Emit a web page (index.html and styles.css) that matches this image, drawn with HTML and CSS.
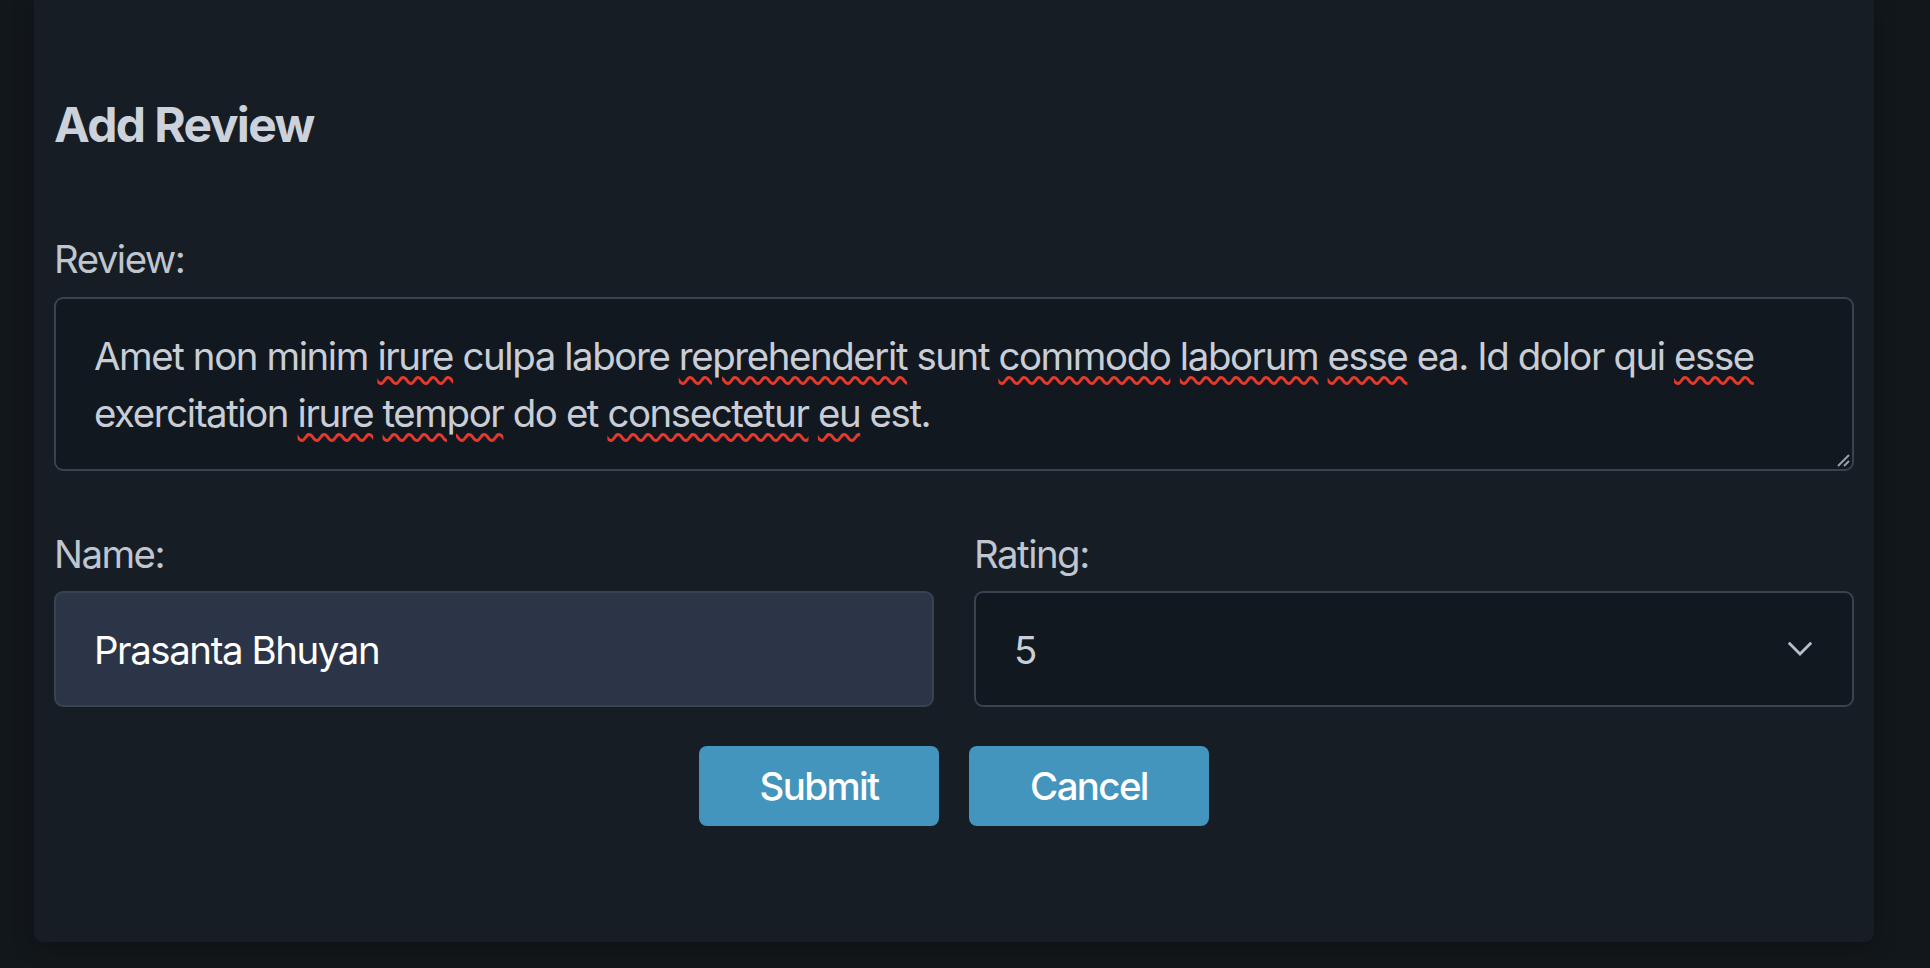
FILE: index.html
```html
<!DOCTYPE html>
<html lang="en">
<head>
<meta charset="utf-8">
<title>Add Review</title>
<link rel="stylesheet" href="styles.css">
</head>
<body>
<main class="page">
  <section class="card">
    <h2 class="title">Add Review</h2>
    <form class="form">
      <div class="field">
        <label class="label">Review:</label>
        <div class="textarea" role="textbox" aria-multiline="true">Amet non minim <span class="sp">irure</span> culpa labore <span class="sp">reprehenderit</span> sunt <span class="sp">commodo</span> <span class="sp">laborum</span> <span class="sp">esse</span> ea. Id dolor qui <span class="sp">esse</span> exercitation <span class="sp">irure</span> <span class="sp">tempor</span> do et <span class="sp">consectetur</span> <span class="sp">eu</span> est.<svg class="resize" width="14" height="14" viewBox="0 0 14 14"><path d="M13 2 L2 13 M13 8 L8 13" stroke="#9aa0a6" stroke-width="2" fill="none"/></svg></div>
      </div>
      <div class="row">
        <div class="field">
          <label class="label label-row">Name:</label>
          <div class="input">Prasanta Bhuyan</div>
        </div>
        <div class="field">
          <label class="label label-row">Rating:</label>
          <div class="select">
            <span class="select-value">5</span>
            <svg class="chev" width="26" height="15" viewBox="0 0 26 15"><path d="M1.8 1.8 L13 13 L24.2 1.8" stroke="#b9c0ca" stroke-width="2.8" fill="none"/></svg>
          </div>
        </div>
      </div>
      <div class="actions">
        <button type="button" class="btn">Submit</button>
        <button type="button" class="btn">Cancel</button>
      </div>
    </form>
  </section>
</main>
</body>
</html>
```
FILE: styles.css
```css
* { box-sizing: border-box; }
html, body { margin: 0; padding: 0; }
body {
  background: #12171b;
  font-family: Inter, "Noto Sans", "Liberation Sans", sans-serif;
  height: 968px;
  overflow: hidden;
}
.page {
  padding: 0 56px 0 34px;
}
.card {
  background: #171d25;
  border-radius: 0 0 9px 9px;
  padding: 96px 20px 116px;
  box-shadow: 0 4px 22px rgba(0,0,0,0.25);
}
.title {
  margin: 0;
  font-size: 48px;
  line-height: 57.6px;
  font-weight: 700;
  color: #cbd2db;
  letter-spacing: -1.6px;
}
.form {
  margin-top: 77px;
  display: flex;
  flex-direction: column;
}
.field {
  display: flex;
  flex-direction: column;
  flex: 1;
}
.label {
  font-size: 38.4px;
  line-height: 57.6px;
  color: #bfc6cf;
  margin-bottom: 8.6px;
  letter-spacing: -1.5px;
}
.label-row {
  margin-bottom: 7.6px;
}
.textarea {
  position: relative;
  height: 174px;
  border: 2px solid #38434f;
  border-radius: 9px;
  background: #121820;
  padding: 29px 38px 25px;
  font-size: 38.4px;
  line-height: 57px;
  color: #c9ced6;
  letter-spacing: -1.4px;
}
.sp {
  text-decoration: underline wavy #e5392b;
  text-decoration-thickness: 3px;
  text-underline-offset: 6px;
}
.resize {
  position: absolute;
  right: 2px;
  bottom: 2px;
}
.row {
  display: flex;
  gap: 40px;
  margin-top: 55px;
}
.input, .select {
  height: 116px;
  border: 2px solid #38434f;
  border-radius: 9px;
  padding: 2px 38px 0;
  display: flex;
  align-items: center;
  font-size: 38.4px;
  letter-spacing: -1.4px;
}
.input {
  background: #2b3547;
  color: #ffffff;
}
.select {
  background: #121820;
  color: #c9ced6;
  justify-content: space-between;
}
.chev {
  margin-right: 1px;
  margin-top: -2px;
}
.actions {
  display: flex;
  justify-content: center;
  gap: 30px;
  margin-top: 39px;
}
.btn {
  width: 240px;
  height: 80px;
  border: none;
  border-radius: 8px;
  background: #4495bd;
  color: #ffffff;
  font-family: inherit;
  font-size: 38.4px;
  font-weight: 500;
  letter-spacing: -1.6px;
  cursor: pointer;
}
```
